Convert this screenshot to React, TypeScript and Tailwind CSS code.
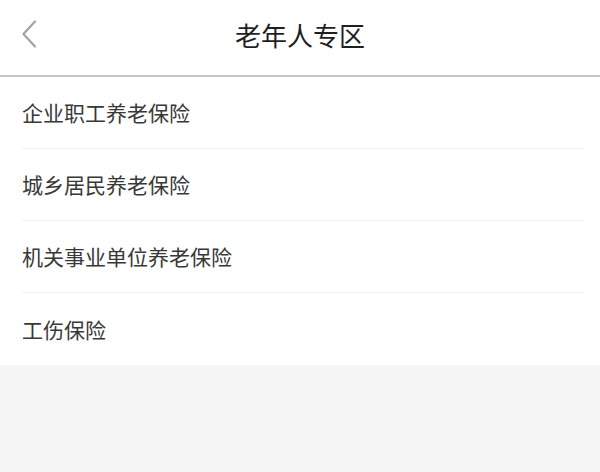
import React from 'react';

const items = ['企业职工养老保险', '城乡居民养老保险', '机关事业单位养老保险', '工伤保险'];

const App: React.FC = () => {
  return (
    <div
      className="min-h-[472px] bg-[#f5f5f5]"
      style={{ fontFamily: '"Noto Sans CJK SC", "Noto Sans", sans-serif' }}
    >
      {/* Header */}
      <div className="relative h-[77px] bg-white border-b-2 border-[#c4c4c4] flex items-center justify-center pb-[6px]">
        <button className="absolute left-[20px] top-[20px] w-[18px] h-[28px] flex items-center justify-center">
          <svg width="16" height="28" viewBox="0 0 16 28" fill="none">
            <path d="M14 1.5 L2.5 14 L14 26.5" stroke="#a3a3a3" strokeWidth="2.2" strokeLinecap="round" strokeLinejoin="round" />
          </svg>
        </button>
        <h1 className="text-[26px] text-[#1f1f1f] leading-none">老年人专区</h1>
      </div>

      {/* List */}
      <div className="bg-white">
        {items.map((label, i) => (
          <div key={i} className="h-[72px] px-[22px]">
            <div
              className={
                i < items.length - 1
                  ? 'h-full flex items-center border-b border-[#f0f0f0] mr-[-5px]'
                  : 'h-full flex items-center'
              }
            >
              <span className="text-[21px] text-[#383838] leading-none">{label}</span>
            </div>
          </div>
        ))}
      </div>
    </div>
  );
};

export default App;
